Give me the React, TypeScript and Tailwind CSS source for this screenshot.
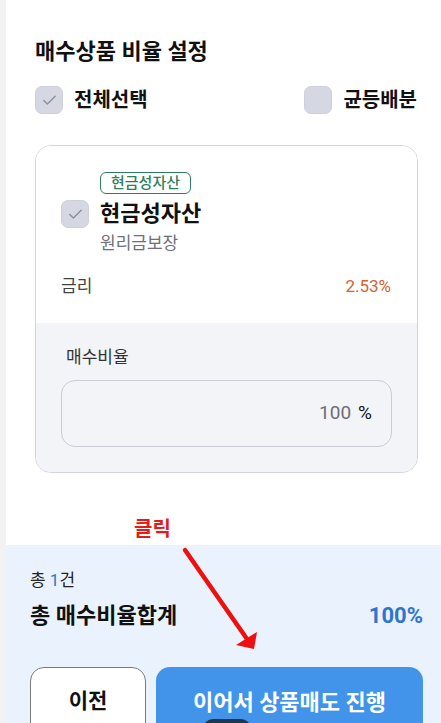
import { Check } from "lucide-react";

function Box({ checked }: { checked?: boolean }) {
  return (
    <div className="w-[28px] h-[28px] rounded-[7px] bg-[#d5d8e2] border border-[#cdd0da] flex items-center justify-center shrink-0">
      {checked && <Check className="w-[17px] h-[17px] text-[#8d909a]" strokeWidth={2} />}
    </div>
  );
}

export default function App() {
  return (
    <div
      className="relative w-[441px] h-[723px] overflow-hidden bg-[#f2f2f2] pl-[6px]"
      style={{ fontFamily: "Roboto, 'Noto Sans CJK KR', sans-serif" }}
    >
      <div className="h-full bg-white flex flex-col">
        <div className="px-[29px] pt-[35px]">
          <h1 className="text-[22px] font-bold text-[#111] leading-[34px]">매수상품 비율 설정</h1>
          <div className="flex items-center justify-between mt-[16px] mr-[-5px] h-[30px]">
            <div className="flex items-center gap-[11px]">
              <Box checked />
              <span className="text-[20px] font-bold text-[#111] leading-[30px]">전체선택</span>
            </div>
            <div className="flex items-center gap-[11px]">
              <Box />
              <span className="text-[20px] font-bold text-[#111] leading-[30px]">균등배분</span>
            </div>
          </div>

          <div className="mt-[30px] w-[383px] rounded-[16px] border border-[#d3d5dc] overflow-hidden">
            <div className="bg-white px-[25px] pt-[25px] pb-[24px]">
              <div className="pl-[39px] h-[23px]">
                <span className="inline-block border-[1.5px] border-[#2e7f5c] rounded-[6px] px-[10px] text-[15px] leading-[20px] text-[#2e7f5c] font-medium">
                  현금성자산
                </span>
              </div>
              <div className="flex items-center gap-[11px] mt-[5px] h-[30px]">
                <Box checked />
                <span className="text-[22px] font-bold text-[#111] leading-[30px]">현금성자산</span>
              </div>
              <div className="pl-[39px] text-[17px] text-[#6d7079] leading-[24px] mt-[2px]">원리금보장</div>
              <div className="flex justify-between items-center mt-[20px] h-[24px] pr-[1px]">
                <span className="text-[17px] text-[#444]">금리</span>
                <span className="text-[17px] text-[#d1652f]">2.53%</span>
              </div>
            </div>
            <div className="bg-[#f3f4f8] px-[25px] pt-[22px] pb-[25px]">
              <div className="pl-[5px] text-[17px] text-[#333] leading-[24px]">매수비율</div>
              <div className="mt-[11px] h-[67px] rounded-[14px] border border-[#c9ccd4] flex items-center justify-end pr-[19px] gap-[7px]">
                <span className="text-[19px] text-[#6b6e77]">100</span>
                <span className="text-[19px] text-[#111]">%</span>
              </div>
            </div>
          </div>
        </div>

        <div className="h-[72px] shrink-0 flex items-end pl-[128px] pb-[2px]">
          <span className="text-[20px] font-bold text-[#e31b1b] leading-[28px]">클릭</span>
        </div>

        <div className="flex-1 bg-[#eaf3fd] pl-[24px] pr-[18px] pt-[22px]">
          <div className="text-[17px] text-[#222] leading-[26px]">
            총 <span className="text-[#2f74d0]">1</span>건
          </div>
          <div className="flex justify-between items-center mt-[7px] h-[30px]">
            <span className="text-[22px] font-bold text-[#111]">총 매수비율합계</span>
            <span className="text-[22px] font-bold text-[#2f74d0]">100%</span>
          </div>
          <div className="flex gap-[10px] mt-[37px]">
            <button className="w-[116px] h-[70px] shrink-0 rounded-[14px] border border-[#7a7a7a] bg-white text-[21px] font-bold text-[#111]">
              이전
            </button>
            <button className="relative flex-1 h-[70px] rounded-[14px] bg-[#4294ea] text-[22px] font-bold text-white">
              이어서 상품매도 진행
              <span className="absolute left-[47px] top-[52px] w-[48px] h-[20px] rounded-[10px] bg-[#1f3550]" />
            </button>
          </div>
        </div>
      </div>

      <svg className="absolute left-0 top-0 pointer-events-none" width="441" height="723">
        <line x1="185" y1="550" x2="247" y2="639" stroke="#ee1010" strokeWidth="4.5" strokeLinecap="round" />
        <polygon points="254,649 236,645 257,632" fill="#ee1010" />
      </svg>
    </div>
  );
}
